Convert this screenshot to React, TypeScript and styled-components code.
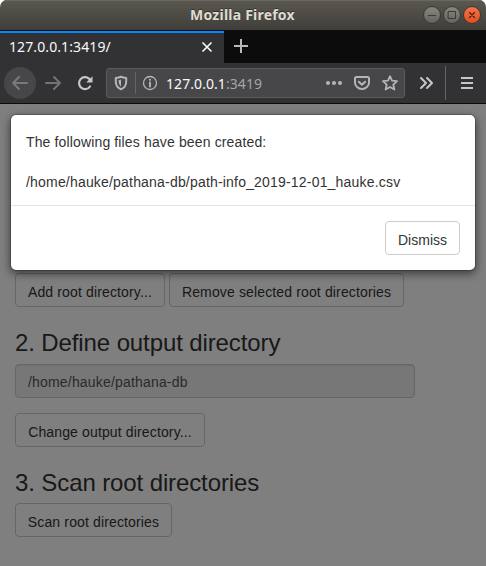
import React from 'react';
import styled, { createGlobalStyle } from 'styled-components';

const GlobalStyle = createGlobalStyle`
  *, *::before, *::after { box-sizing: border-box; }
  html, body { margin: 0; background: #fff; }
  body { font-family: "Liberation Sans", Arial, sans-serif; font-size: 14px; overflow: hidden; }
  button { font-family: inherit; }
`;

const Window = styled.div`
  width: 486px;
  height: 566px;
  display: flex;
  flex-direction: column;
  overflow: hidden;
  border-radius: 7px 7px 0 0;
`;

const TitleBar = styled.header`
  height: 30px;
  flex: none;
  display: grid;
  grid-template-columns: 1fr auto 1fr;
  align-items: center;
  padding: 0 5px 0 4px;
  background: linear-gradient(#5a5850, #403e39);
  box-shadow: inset 0 1px #696860;
`;

const Title = styled.h1`
  grid-column: 2;
  margin: 0;
  font: 700 14px/30px "Noto Sans", sans-serif;
  letter-spacing: 0.22px;
  white-space: nowrap;
  color: #dfdbd2;
  text-shadow: 0 -1px rgba(0, 0, 0, 0.4);
`;

const WindowButtons = styled.div`
  justify-self: end;
  display: flex;
  gap: 2px;
`;

const RoundButton = styled.button<{ $close?: boolean }>`
  width: 18px;
  height: 18px;
  padding: 0;
  display: grid;
  place-items: center;
  border: 1px solid #3a3935;
  border-radius: 50%;
  background: ${(p) => (p.$close ? 'linear-gradient(#f37449, #e2501f)' : 'linear-gradient(#868580, #66645d)')};
  color: ${(p) => (p.$close ? '#4e2415' : '#3a3935')};
  svg { display: block; }
`;

const TabStrip = styled.div`
  height: 33px;
  flex: none;
  display: flex;
  background: #0c0c0d;
`;

const Tab = styled.div`
  width: 224px;
  height: 33px;
  display: flex;
  align-items: center;
  justify-content: space-between;
  padding: 0 11px 0 9px;
  background: #323234;
  border-top: 1px solid #0c0c0d;
  box-shadow: inset 0 2px #0a84ff;
  color: #f9f9fa;
`;

const TabLabel = styled.span`
  font: 14px/20px "Noto Sans", sans-serif;
  letter-spacing: 0.1px;
`;

const NewTab = styled.div`
  padding: 8px 0 0 9px;
  height: 33px;
`;

const Toolbar = styled.nav`
  height: 41px;
  flex: none;
  display: flex;
  align-items: center;
  background: #323234;
  border-bottom: 1px solid #0c0c0d;
  color: #c7c7c8;
  svg { display: block; flex: none; }
`;

const BackButton = styled.div`
  width: 32px;
  height: 32px;
  margin-left: 4px;
  display: grid;
  place-items: center;
  border-radius: 50%;
  background: #474749;
  color: #79797b;
`;

const ToolIcon = styled.div<{ $left: number; $dim?: boolean }>`
  margin-left: ${(p) => p.$left}px;
  color: ${(p) => (p.$dim ? '#737375' : 'inherit')};
`;

const UrlBar = styled.div`
  width: 299px;
  height: 30px;
  margin-left: 13px;
  padding-right: 6px;
  display: flex;
  align-items: center;
  background: #474749;
  border: 1px solid #5b5b5d;
  border-radius: 3px;
  color: #b5b5b7;
`;

const Divider = styled.div<{ $height: number; $left: number }>`
  width: 1px;
  height: ${(p) => p.$height}px;
  margin-left: ${(p) => p.$left}px;
  background: #646466;
`;

const Address = styled.div`
  flex: 1;
  margin: 1px 0 0 8px;
  font: 14px/20px "Noto Sans", sans-serif;
  letter-spacing: 0.07px;
  color: #a5a5a7;
  b { font-weight: 400; color: #f9f9fa; }
`;

const Page = styled.main`
  position: relative;
  flex: 1;
  overflow: hidden;
  background: #fff;
  color: #333;
`;

const Content = styled.div`
  padding: 169px 15px 0;
`;

const ButtonRow = styled.div`
  display: flex;
  gap: 4px;
`;

const Button = styled.button<{ $width: number }>`
  width: ${(p) => p.$width}px;
  height: 34px;
  padding: 3px 0 0;
  border: 1px solid #ccc;
  border-radius: 4px;
  background: #fff;
  color: #333;
  font-size: 14px;
  line-height: 20px;
  letter-spacing: ${(p) => (p.$width > 100 ? 0.14 : 0)}px;
  white-space: nowrap;
`;

const Heading = styled.h3<{ $gap: number }>`
  margin: 23px 0 ${(p) => p.$gap}px;
  font-size: 24px;
  line-height: 26px;
  font-weight: 400;
  letter-spacing: -0.11px;
  color: #333;
`;

const Field = styled.div`
  width: 400px;
  height: 34px;
  margin-bottom: 15px;
  padding: 7px 12px 5px;
  border: 1px solid #ccc;
  border-radius: 4px;
  background: #eee;
  box-shadow: inset 0 1px 1px rgba(0, 0, 0, 0.075);
  color: #555;
  line-height: 20px;
  letter-spacing: 0.18px;
`;

const Backdrop = styled.div`
  position: absolute;
  inset: 0;
  background: rgba(0, 0, 0, 0.5);
`;

const Modal = styled.section`
  position: absolute;
  top: 10px;
  left: 10px;
  right: 10px;
  border: 1px solid rgba(0, 0, 0, 0.2);
  border-radius: 6px;
  background: #fff;
  background-clip: padding-box;
  box-shadow: 0 3px 9px rgba(0, 0, 0, 0.5);
`;

const ModalBody = styled.div`
  height: 90px;
  padding: 17px 15px 0;
  line-height: 20px;
`;

const Message = styled.p`
  margin: 0 0 20px;
  letter-spacing: 0.14px;
  white-space: nowrap;
`;

const FilePath = styled(Message)`
  letter-spacing: 0.19px;
`;

const ModalFooter = styled.footer`
  display: flex;
  justify-content: flex-end;
  padding: 15px;
  border-top: 1px solid #e5e5e5;
`;

interface IconProps {
  size?: number;
  stroke?: number;
  children: React.ReactNode;
}

const Icon = ({ size = 16, stroke = 2, children }: IconProps) => (
  <svg width={size} height={size} viewBox={`0 0 ${size} ${size}`} fill="none" stroke="currentColor"
    strokeWidth={stroke} strokeLinecap="round" strokeLinejoin="round">
    {children}
  </svg>
);

export default function App() {
  return (
    <>
      <GlobalStyle />
      <Window>
        <TitleBar>
          <Title>Mozilla Firefox</Title>
          <WindowButtons>
            <RoundButton aria-label="Minimize"><Icon stroke={1}><path d="M4.5 8.5h7" /></Icon></RoundButton>
            <RoundButton aria-label="Maximize"><Icon stroke={1}><path d="M4.5 4.5h7v7h-7z" /></Icon></RoundButton>
            <RoundButton aria-label="Close" $close><Icon stroke={1.3}><path d="M5.5 5.5l5 5m0-5l-5 5" /></Icon></RoundButton>
          </WindowButtons>
        </TitleBar>
        <TabStrip>
          <Tab>
            <TabLabel>127.0.0.1:3419/</TabLabel>
            <Icon size={12} stroke={1.7}><path d="M2 2l8 8m0-8l-8 8" /></Icon>
          </Tab>
          <NewTab>
            <svg width="16" height="16" viewBox="0 0 16 16" fill="none" stroke="#b9b9ba" strokeWidth="2">
              <path d="M1 8h14M8 1v14" />
            </svg>
          </NewTab>
        </TabStrip>
        <Toolbar>
          <BackButton><Icon><path d="M15 8H1m6-6L1 8l6 6" /></Icon></BackButton>
          <ToolIcon $left={9} $dim><Icon><path d="M1 8h14M9 2l6 6-6 6" /></Icon></ToolIcon>
          <ToolIcon $left={16}>
            <Icon stroke={2.2}>
              <path d="M13 11.500A6 6 0 1 1 12 3.600L13.500 5" />
              <path d="M15.500 1.300V7.500H9.200z" fill="currentColor" stroke="none" />
            </Icon>
          </ToolIcon>
          <UrlBar>
            <ToolIcon $left={6}>
              <Icon>
                <path d="M8 1.800c1.800.7 3.500 1 5.200 1.200v3.500c0 4-1.800 6.500-5.200 7.800-3.400-1.300-5.200-3.800-5.200-7.800V3c1.700-.2 3.400-.5 5.200-1.200z" />
                <path d="M8 4.500v7C6.300 10 5.600 8.500 5.500 5.200 6.500 5 7.200 4.800 8 4.500z" fill="currentColor" stroke="none" />
              </Icon>
            </ToolIcon>
            <Divider $height={22} $left={6} />
            <ToolIcon $left={6}>
              <Icon stroke={1.3}>
                <circle cx="8" cy="8" r="6.500" />
                <path d="M8 7.500v4" strokeWidth="1.9" />
                <circle cx="8" cy="4.800" r="1.100" fill="currentColor" stroke="none" />
              </Icon>
            </ToolIcon>
            <Address><b>127.0.0.1</b>:3419</Address>
            <ToolIcon $left={0}>
              <Icon>
                <g fill="currentColor" stroke="none"><circle cx="2" cy="8" r="2" /><circle cx="8" cy="8" r="2" /><circle cx="14" cy="8" r="2" /></g>
              </Icon>
            </ToolIcon>
            <ToolIcon $left={12}>
              <Icon><path d="M2.500 2h11q1.500 0 1.500 1.500V7.500a7 6.500 0 0 1-14 0V3.500Q1 2 2.500 2z" /><path d="M4.800 6.800L8 9.800l3.200-3" /></Icon>
            </ToolIcon>
            <ToolIcon $left={12}>
              <Icon stroke={1.8}><path d="M8 1.200l2 4.500 5 .5-3.700 3.400 1.100 4.900L8 12l-4.400 2.500 1.100-4.900L1 6.200l5-.5z" /></Icon>
            </ToolIcon>
          </UrlBar>
          <ToolIcon $left={13}><Icon><path d="M3 3l5 5-5 5M9 3l5 5-5 5" /></Icon></ToolIcon>
          <Divider $height={34} $left={11} />
          <ToolIcon $left={13}><Icon><path d="M3 3h10M3 8h10M3 13h10" strokeLinecap="square" /></Icon></ToolIcon>
        </Toolbar>
        <Page>
          <Content>
            <ButtonRow>
              <Button $width={150}>Add root directory...</Button>
              <Button $width={235}>Remove selected root directories</Button>
            </ButtonRow>
            <Heading $gap={8}>2. Define output directory</Heading>
            <Field>/home/hauke/pathana-db</Field>
            <ButtonRow><Button $width={190}>Change output directory...</Button></ButtonRow>
            <Heading $gap={7}>3. Scan root directories</Heading>
            <ButtonRow><Button $width={157}>Scan root directories</Button></ButtonRow>
          </Content>
          <Backdrop />
          <Modal role="dialog">
            <ModalBody>
              <Message>The following files have been created:</Message>
              <FilePath>/home/hauke/pathana-db/path-info_2019-12-01_hauke.csv</FilePath>
            </ModalBody>
            <ModalFooter><Button $width={75}>Dismiss</Button></ModalFooter>
          </Modal>
        </Page>
      </Window>
    </>
  );
}
